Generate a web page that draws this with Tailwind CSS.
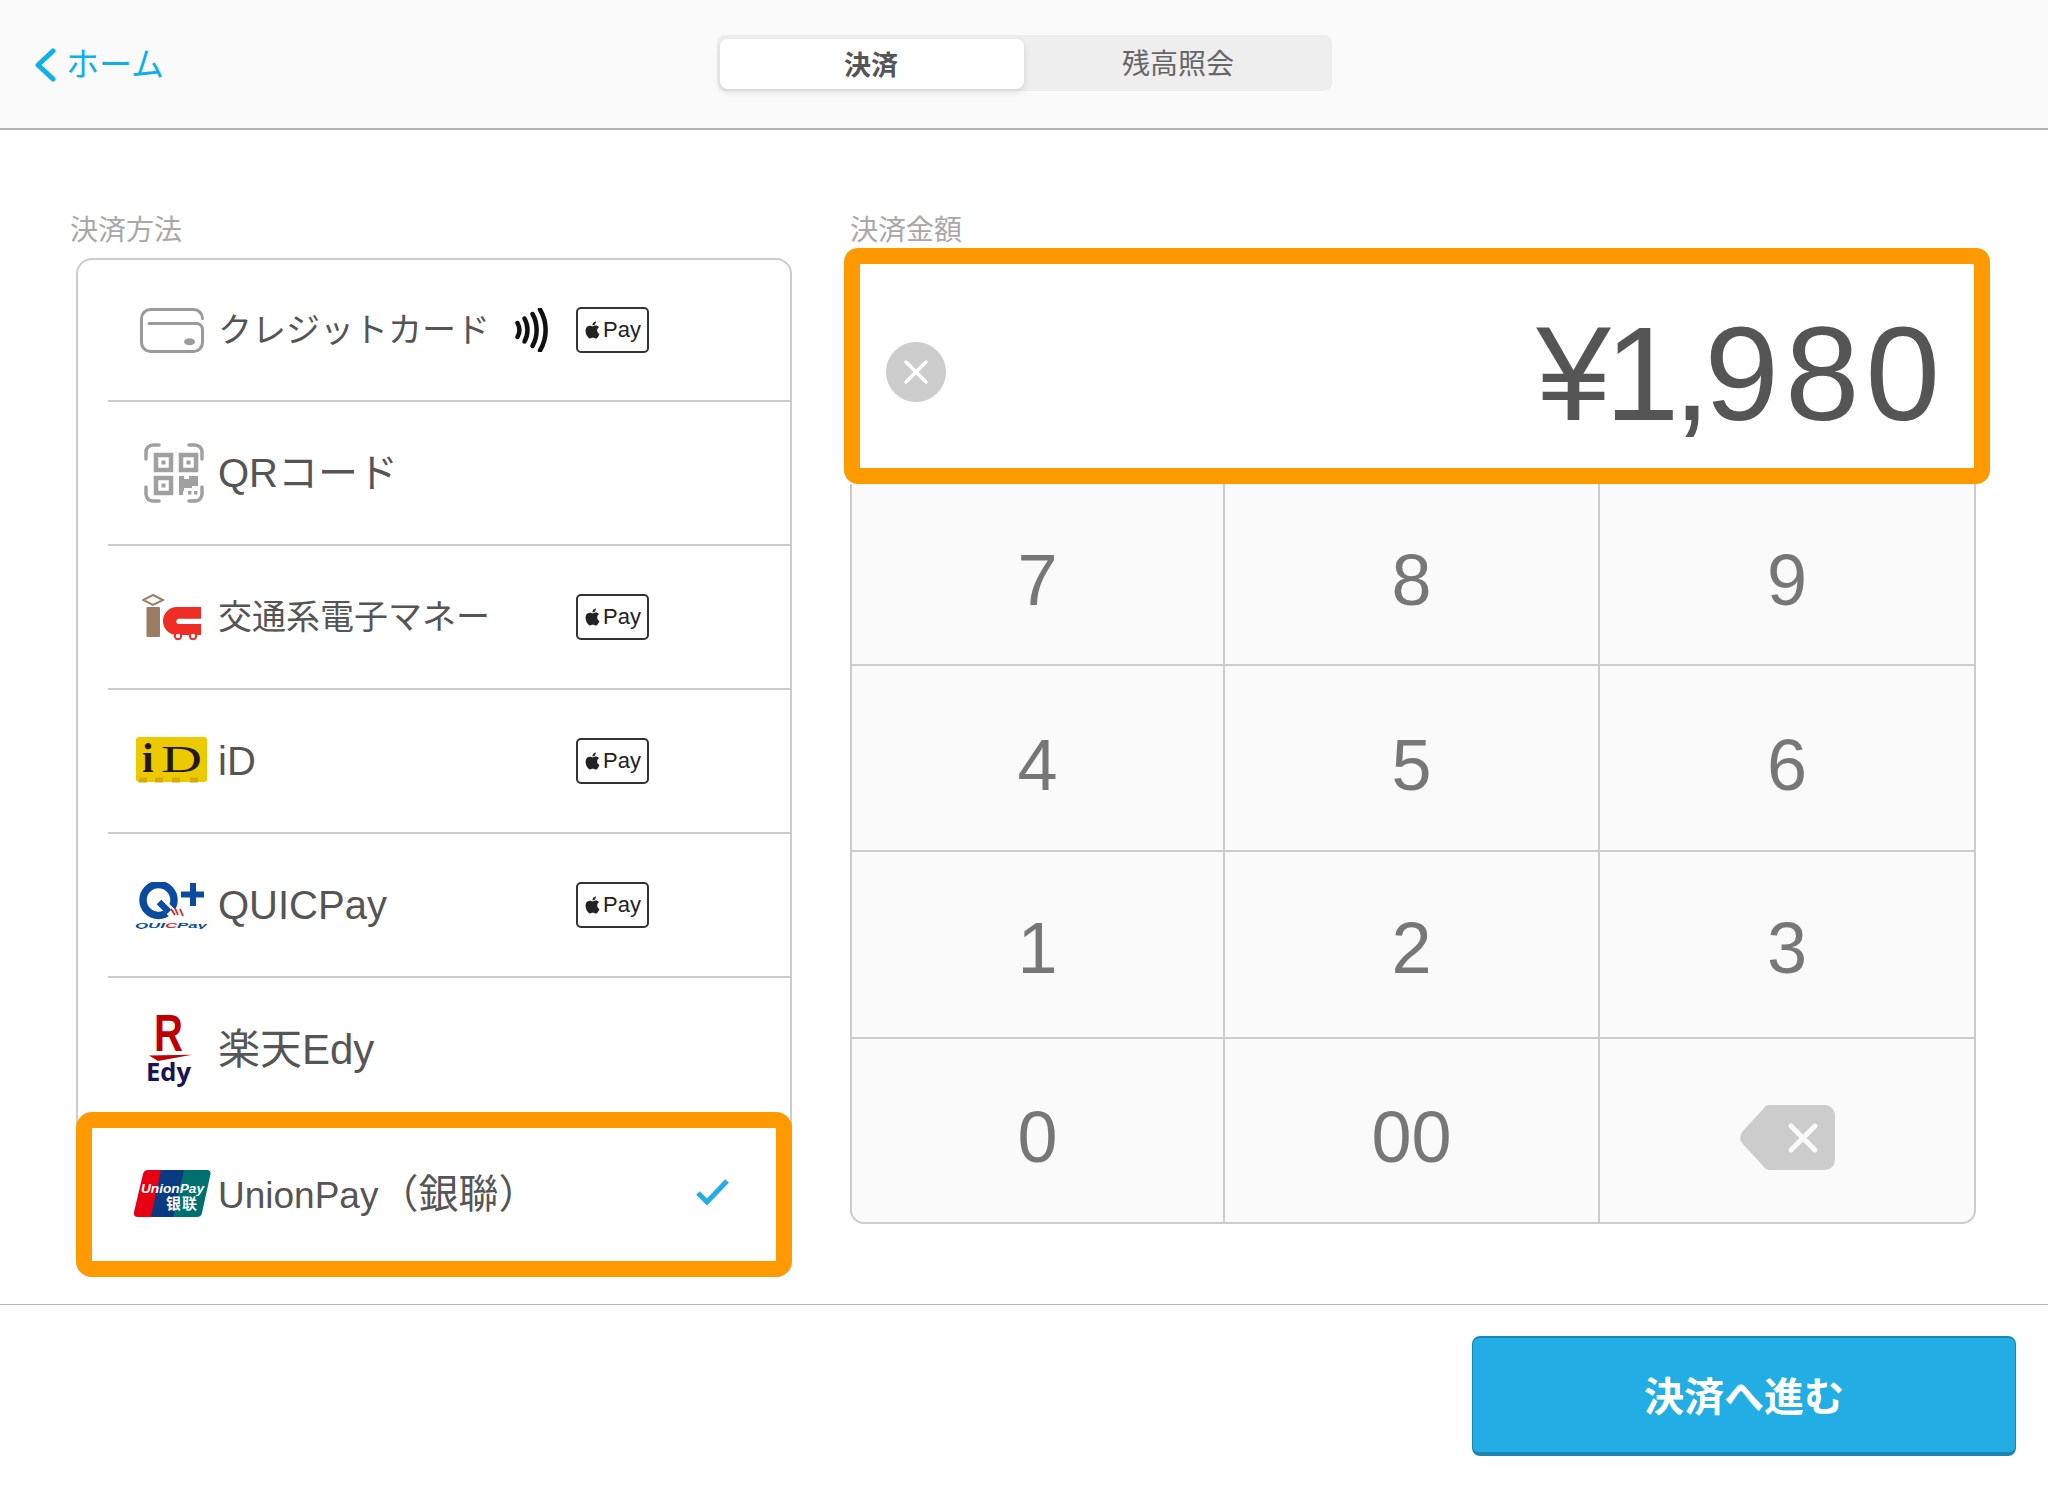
<!DOCTYPE html>
<html lang="ja">
  <head>
    <meta charset="UTF-8" />
    <meta name="viewport" content="width=device-width, initial-scale=1.0" />
    <script src="https://cdn.jsdelivr.net/npm/@tailwindcss/browser@4"></script>
    <title>決済</title>
  </head>
  <body class="bg-white font-['Liberation_Sans','Noto_Sans_CJK_JP',sans-serif] text-[#555]">
    <div class="flex h-[1488px] w-[2048px] flex-col overflow-hidden">
      <!-- header -->
      <header class="relative flex h-[130px] items-start border-b-2 border-[#b2b2b2] bg-[#fafafa]">
        <a class="ml-[34px] mt-[45px] flex items-center text-[33px] leading-[40px] text-[#0fafe9]">
          <svg class="mr-[10px] h-[34px] w-[22px]" viewBox="0 0 22 34" fill="none" stroke="#0fafe9" stroke-width="5" stroke-linecap="round" stroke-linejoin="round">
            <path d="M19 3L4 17l15 14" />
          </svg>
          ホーム
        </a>
        <div class="absolute left-[717px] top-[35px] flex h-[56px] w-[615px] rounded-[8px] bg-[#eeeeee] py-[4px] pl-[3px]">
          <div class="flex h-[50px] w-[304px] items-center justify-center rounded-[8px] bg-white pr-[2px] pt-[4px] text-[27px] font-bold text-[#555] shadow-[0_3px_6px_rgba(0,0,0,0.12)]">決済</div>
          <div class="flex flex-1 items-center justify-center pt-[4px] text-[28px] text-[#666]">残高照会</div>
        </div>
      </header>

      <main class="flex h-[1174px] pl-[70px] pt-[80px]">
        <!-- payment methods -->
        <section class="w-[722px]">
          <p class="mb-[8px] h-[40px] text-[28px] leading-[42px] text-[#a8a8a8]">決済方法</p>
          <div class="ml-[6px] flex w-[716px] flex-col rounded-[16px] border-2 border-[#cccccc]">
            <div class="ml-[30px] flex h-[142px] items-center border-b-2 border-[#cccccc]">
              <div class="flex w-[110px] justify-center pl-[18px]">
                <svg class="h-[45px] w-[64px]" viewBox="0 0 64 45" fill="none" stroke="#9b9b9b" stroke-width="3" stroke-linecap="round">
                  <path d="M62.5 10.5a9 9 0 0 0-9-9h-43a9 9 0 0 0-9 9v24a9 9 0 0 0 9 9h43a9 9 0 0 0 9-9V21.500a6 6 0 0 0-6-6H9" />
                  <ellipse cx="49.500" cy="33.700" rx="5.500" ry="3.500" fill="#9b9b9b" stroke="none" />
                </svg>
              </div>
              <span class="text-[34px] leading-none">クレジットカード</span>
              <svg class="ml-auto mr-[28px] h-[44px] w-[33px]" viewBox="0 0 33 44" fill="none" stroke="#111" stroke-linecap="round">
                <path d="M2.500 15c2.500 4.500 2.500 9.500 0 14" stroke-width="4.500" />
                <path d="M9.500 10.500c4 7 4 16 0 23" stroke-width="4.500" />
                <path d="M17.500 6c5.500 9.500 5.500 22.500 0 32" stroke-width="4.500" />
                <path d="M25 1.500c7.500 12.500 7.500 28.500 0 41" stroke-width="4.500" />
              </svg>
              <div class="mr-[141px] flex h-[46px] w-[73px] items-center justify-center gap-[2px] rounded-[5px] border-2 border-[#333] pb-[1px] text-[22px] leading-none text-[#222]">
                <svg class="h-[20px] w-[17px]" viewBox="0 0 24 24" fill="#222"><path d="M12.152 6.896c-.948 0-2.415-1.078-3.96-1.04-2.04.027-3.91 1.183-4.961 3.014-2.117 3.675-.546 9.103 1.519 12.09 1.013 1.454 2.208 3.09 3.792 3.039 1.52-.065 2.09-.987 3.935-.987 1.831 0 2.35.987 3.96.948 1.637-.026 2.676-1.48 3.676-2.948 1.156-1.688 1.636-3.325 1.662-3.415-.039-.013-3.182-1.221-3.22-4.857-.026-3.04 2.48-4.494 2.597-4.559-1.429-2.09-3.623-2.324-4.39-2.376-2-.156-3.675 1.09-4.61 1.09zM15.53 3.83c.843-1.012 1.4-2.427 1.245-3.83-1.207.052-2.662.805-3.532 1.818-.78.896-1.454 2.338-1.273 3.714 1.338.104 2.715-.688 3.559-1.701" /></svg>
                Pay
              </div>
            </div>

            <div class="ml-[30px] flex h-[144px] items-center border-b-2 border-[#cccccc]">
              <div class="flex w-[110px] justify-center pl-[22px]">
                <svg class="h-[60px] w-[60px]" viewBox="0 0 60 60" fill="none" stroke="#a0a0a0" stroke-width="3.500" stroke-linecap="round">
                  <path d="M2 16V9a7 7 0 0 1 7-7h6M45 2h6a7 7 0 0 1 7 7v7M2 44v7a7 7 0 0 0 7 7h6M58 44v7a7 7 0 0 1-7 7h-6" />
                  <g stroke-width="4.500" stroke-linecap="butt">
                    <rect x="12" y="12" width="15" height="15" />
                    <rect x="37" y="12" width="15" height="15" />
                    <rect x="12" y="35" width="15" height="15" />
                  </g>
                  <g fill="#a0a0a0" stroke="none">
                    <rect x="17.500" y="17.500" width="4" height="4" />
                    <rect x="42.500" y="17.500" width="4" height="4" />
                    <rect x="17.500" y="40.500" width="4" height="4" />
                    <path d="M35 33h5v3h5v-3h9v10h-6v2h-8v3h-1v4h-4z" />
                    <rect x="44" y="48" width="3.500" height="3.500" />
                    <rect x="50" y="48" width="3.500" height="3.500" />
                  </g>
                </svg>
              </div>
              <span class="text-[40px] leading-none">QRコード</span>
            </div>

            <div class="ml-[30px] flex h-[144px] items-center border-b-2 border-[#cccccc]">
              <div class="flex w-[110px] justify-center pl-[18px]">
                <svg class="h-[46px] w-[60px]" viewBox="0 0 60 46">
                  <path d="M11 1l10 5-10 5L1 6z" fill="none" stroke="#9c7e65" stroke-width="2" />
                  <rect x="4.500" y="13" width="13.500" height="30" rx="1" fill="#9a7d64" />
                  <path d="M59 13H35a14 14 0 0 0 0 28h24V30H37a2.600 2.600 0 0 1 0-5.200h22z" fill="#ee2d24" />
                  <circle cx="36" cy="42" r="3.200" fill="#fff" stroke="#ee2d24" stroke-width="2" />
                  <circle cx="51" cy="42" r="3.200" fill="#fff" stroke="#ee2d24" stroke-width="2" />
                </svg>
              </div>
              <span class="text-[34px] leading-none">交通系電子マネー</span>
              <div class="ml-auto mr-[141px] flex h-[46px] w-[73px] items-center justify-center gap-[2px] rounded-[5px] border-2 border-[#333] pb-[1px] text-[22px] leading-none text-[#222]">
                <svg class="h-[20px] w-[17px]" viewBox="0 0 24 24" fill="#222"><path d="M12.152 6.896c-.948 0-2.415-1.078-3.96-1.04-2.04.027-3.91 1.183-4.961 3.014-2.117 3.675-.546 9.103 1.519 12.09 1.013 1.454 2.208 3.09 3.792 3.039 1.52-.065 2.09-.987 3.935-.987 1.831 0 2.35.987 3.96.948 1.637-.026 2.676-1.48 3.676-2.948 1.156-1.688 1.636-3.325 1.662-3.415-.039-.013-3.182-1.221-3.22-4.857-.026-3.04 2.48-4.494 2.597-4.559-1.429-2.09-3.623-2.324-4.39-2.376-2-.156-3.675 1.09-4.61 1.09zM15.53 3.83c.843-1.012 1.4-2.427 1.245-3.83-1.207.052-2.662.805-3.532 1.818-.78.896-1.454 2.338-1.273 3.714 1.338.104 2.715-.688 3.559-1.701" /></svg>
                Pay
              </div>
            </div>

            <div class="ml-[30px] flex h-[144px] items-center border-b-2 border-[#cccccc]">
              <div class="flex w-[110px] justify-center pl-[16px] pb-[3px]">
                <svg class="h-[45px] w-[71px] overflow-visible" viewBox="0 0 71 45">
                  <rect width="71" height="45" rx="3" fill="#ecca00" />
                  <path d="M3 43h8M19 43h8M36 43h8M54 43h8" stroke="#d9a900" stroke-width="5" />
                  <text x="6" y="35" font-family="Liberation Serif" font-weight="700" font-size="42" fill="#231815">i</text>
                  <text x="25" y="35" font-family="Liberation Serif" font-size="38" textLength="41" lengthAdjust="spacingAndGlyphs" fill="#231815">D</text>
                </svg>
              </div>
              <span class="text-[40px] leading-none">iD</span>
              <div class="ml-auto mr-[141px] flex h-[46px] w-[73px] items-center justify-center gap-[2px] rounded-[5px] border-2 border-[#333] pb-[1px] text-[22px] leading-none text-[#222]">
                <svg class="h-[20px] w-[17px]" viewBox="0 0 24 24" fill="#222"><path d="M12.152 6.896c-.948 0-2.415-1.078-3.96-1.04-2.04.027-3.91 1.183-4.961 3.014-2.117 3.675-.546 9.103 1.519 12.09 1.013 1.454 2.208 3.09 3.792 3.039 1.52-.065 2.09-.987 3.935-.987 1.831 0 2.35.987 3.96.948 1.637-.026 2.676-1.48 3.676-2.948 1.156-1.688 1.636-3.325 1.662-3.415-.039-.013-3.182-1.221-3.22-4.857-.026-3.04 2.48-4.494 2.597-4.559-1.429-2.09-3.623-2.324-4.39-2.376-2-.156-3.675 1.09-4.61 1.09zM15.53 3.83c.843-1.012 1.4-2.427 1.245-3.83-1.207.052-2.662.805-3.532 1.818-.78.896-1.454 2.338-1.273 3.714 1.338.104 2.715-.688 3.559-1.701" /></svg>
                Pay
              </div>
            </div>

            <div class="ml-[30px] flex h-[144px] items-center border-b-2 border-[#cccccc]">
              <div class="flex w-[110px] justify-center pl-[16px]">
                <svg class="h-[47px] w-[72px]" viewBox="0 0 72 47" fill="none">
                  <circle cx="23.500" cy="18" r="15.500" stroke="#0a4a9f" stroke-width="7.500" />
                  <path d="M25 19l14 14" stroke="#fff" stroke-width="9" />
                  <path d="M24 20l10 10" stroke="#0a4a9f" stroke-width="6.500" />
                  <path d="M58 1v23M46 12.500h23" stroke="#0a4a9f" stroke-width="6" />
                  <path d="M36 27l4 6M40 26l3 7M45 27l3 7" stroke="#e2231a" stroke-width="1.800" />
                  <text y="46" font-family="Liberation Sans" font-weight="700" font-style="italic" font-size="8" textLength="72" lengthAdjust="spacingAndGlyphs" fill="#0a4a9f">QUI<tspan fill="#e2231a">C</tspan>Pay</text>
                </svg>
              </div>
              <span class="text-[40px] leading-none">QUICPay</span>
              <div class="ml-auto mr-[141px] flex h-[46px] w-[73px] items-center justify-center gap-[2px] rounded-[5px] border-2 border-[#333] pb-[1px] text-[22px] leading-none text-[#222]">
                <svg class="h-[20px] w-[17px]" viewBox="0 0 24 24" fill="#222"><path d="M12.152 6.896c-.948 0-2.415-1.078-3.96-1.04-2.04.027-3.91 1.183-4.961 3.014-2.117 3.675-.546 9.103 1.519 12.09 1.013 1.454 2.208 3.09 3.792 3.039 1.52-.065 2.09-.987 3.935-.987 1.831 0 2.35.987 3.96.948 1.637-.026 2.676-1.48 3.676-2.948 1.156-1.688 1.636-3.325 1.662-3.415-.039-.013-3.182-1.221-3.22-4.857-.026-3.04 2.48-4.494 2.597-4.559-1.429-2.09-3.623-2.324-4.39-2.376-2-.156-3.675 1.09-4.61 1.09zM15.53 3.83c.843-1.012 1.4-2.427 1.245-3.83-1.207.052-2.662.805-3.532 1.818-.78.896-1.454 2.338-1.273 3.714 1.338.104 2.715-.688 3.559-1.701" /></svg>
                Pay
              </div>
            </div>

            <div class="ml-[30px] flex h-[144px] items-center">
              <div class="flex w-[110px] justify-center pl-[18px] pr-[6px]">
                <svg class="h-[72px] w-[46px] overflow-visible" viewBox="0 0 46 72">
                  <text x="8" y="37" font-family="Liberation Sans" font-weight="700" font-size="51" textLength="29" lengthAdjust="spacingAndGlyphs" fill="#bf0000">R</text>
                  <path d="M3 41.500l43-.8-34 6.300z" fill="#bf0000" />
                  <text y="67" font-family="Open Sans" font-weight="700" font-size="25" textLength="45" lengthAdjust="spacingAndGlyphs" fill="#1a1358">Edy</text>
                </svg>
              </div>
              <span class="text-[42px] leading-none">楽天Edy</span>
            </div>

            <!-- selected row -->
            <div class="relative -mx-[2px] -mb-[2px] -mt-[10px] flex h-[165px] items-center rounded-[16px] border-[16px] border-[#ff9900] bg-white pb-[2px] pl-[16px]">
              <div class="flex w-[110px] justify-center pl-[18px]">
                <svg class="h-[47px] w-[77px] overflow-visible" viewBox="0 0 77 47">
                  <path d="M14 0H30L20 47H4Q-1 47 0 42L9 4Q10 0 14 0z" fill="#e60012" />
                  <path d="M27 0H53L42 47H17z" fill="#0a3a82" />
                  <path d="M50 0H73Q77 0 76.500 4L68 43Q67 47 63 47H39z" fill="#00706e" />
                  <text x="7" y="23" font-family="Liberation Sans" font-weight="700" font-style="italic" font-size="13" textLength="63" lengthAdjust="spacingAndGlyphs" fill="#fff">UnionPay</text>
                  <text x="32" y="39" font-family="Noto Sans CJK SC" font-weight="700" font-size="15" fill="#fff" textLength="31">银联</text>
                </svg>
              </div>
              <span class="text-[37px] leading-none">UnionPay<span class="text-[40px]">（銀聯）</span></span>
              <svg class="absolute right-[47px] top-[51px] h-[26px] w-[33px]" viewBox="0 0 33 26" fill="none" stroke="#22aee4" stroke-width="5">
                <path d="M2 14l9 9L31 2" />
              </svg>
            </div>
          </div>
        </section>

        <!-- amount and keypad -->
        <section class="ml-[52px] w-[1146px]">
          <p class="-mb-[2px] ml-[6px] h-[40px] text-[28px] leading-[42px] text-[#a8a8a8]">決済金額</p>
          <div class="flex h-[236px] items-center justify-between rounded-[14px] border-[16px] border-[#ff9900] bg-white pl-[26px] pr-[28px] pt-[12px]">
            <div class="flex h-[60px] w-[60px] items-center justify-center rounded-full bg-[#cccccc]">
              <svg class="h-[26px] w-[26px]" viewBox="0 0 26 26" stroke="#fff" stroke-width="3.500" stroke-linecap="round"><path d="M3 3l20 20M23 3L3 23" /></svg>
            </div>
            <span class="mt-[3px] text-[134px] leading-none text-[#555]"><span class="tracking-[-6px]">¥1,</span><span class="tracking-[6px]">980</span></span>
          </div>
          <div class="ml-[6px] grid h-[740px] w-[1126px] grid-cols-[373px_375px_1fr] grid-rows-[182px_186px_187px_185px] overflow-hidden rounded-b-[14px] border-x-2 border-b-2 border-[#cccccc] bg-[#fafafa] text-[72px] leading-none text-[#777]">
            <div class="flex items-center justify-center border-b-2 border-r-2 border-[#cccccc] pt-[12px]">7</div>
            <div class="flex items-center justify-center border-b-2 border-r-2 border-[#cccccc] pt-[12px]">8</div>
            <div class="flex items-center justify-center border-b-2 border-[#cccccc] pt-[12px]">9</div>
            <div class="flex items-center justify-center border-b-2 border-r-2 border-[#cccccc] pt-[14px]">4</div>
            <div class="flex items-center justify-center border-b-2 border-r-2 border-[#cccccc] pt-[14px]">5</div>
            <div class="flex items-center justify-center border-b-2 border-[#cccccc] pt-[14px]">6</div>
            <div class="flex items-center justify-center border-b-2 border-r-2 border-[#cccccc] pt-[6px]">1</div>
            <div class="flex items-center justify-center border-b-2 border-r-2 border-[#cccccc] pt-[6px]">2</div>
            <div class="flex items-center justify-center border-b-2 border-[#cccccc] pt-[6px]">3</div>
            <div class="flex items-center justify-center border-r-2 border-[#cccccc] pt-[10px]">0</div>
            <div class="flex items-center justify-center border-r-2 border-[#cccccc] pt-[10px]">00</div>
            <div class="flex items-center justify-center pt-[12px]">
              <svg class="h-[65px] w-[95px]" viewBox="0 0 95 65">
                <path d="M29 0H85a10 10 0 0 1 10 10v45a10 10 0 0 1-10 10H29a6 6 0 0 1-5-3L2 38a10 10 0 0 1 0-11L24 3a6 6 0 0 1 5-3z" fill="#cccccc" />
                <path d="M51 21l24 24M75 21L51 45" stroke="#fafafa" stroke-width="5" stroke-linecap="round" />
              </svg>
            </div>
          </div>
        </section>
      </main>

      <footer class="flex h-[184px] justify-end border-t border-[#b5b5b5] pr-[32px] pt-[31px]">
        <button class="h-[120px] w-[544px] rounded-[8px] border-x border-b-4 border-t-2 border-[#1a86b4] bg-[#22aee4] pt-[4px] text-[40px] font-bold text-white">決済へ進む</button>
      </footer>
    </div>
  </body>
</html>
